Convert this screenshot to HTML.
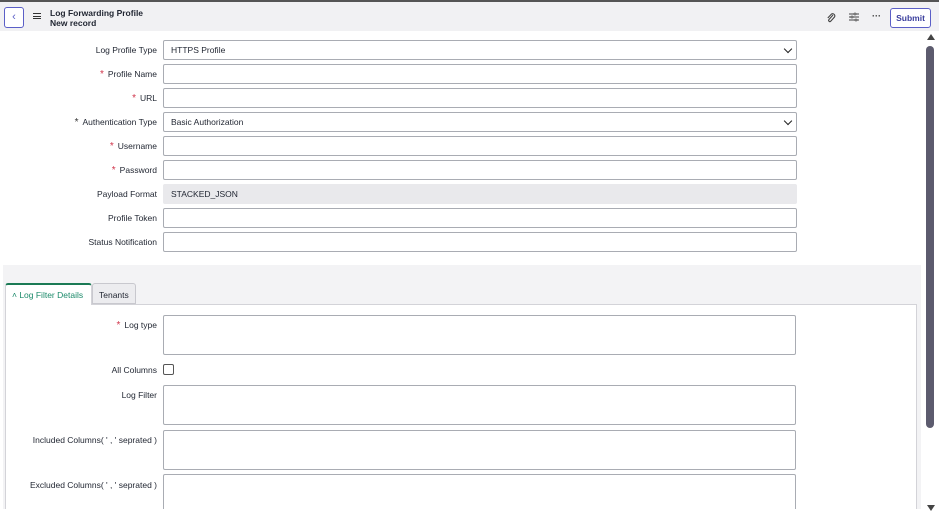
<!DOCTYPE html>
<html><head><style>
*{box-sizing:border-box;margin:0;padding:0}
body{width:939px;height:523px;overflow:hidden;background:#fff;font-family:"Liberation Sans",sans-serif;font-size:8.5px;color:#1f2430;position:relative}
.hdr{position:absolute;left:0;top:0;width:939px;height:31px;background:#f1f1f3;border-top:2px solid #555}
.back{position:absolute;left:4px;top:5px;width:20px;height:21px;border:1px solid #5b5fc7;border-radius:3px;background:#fff;color:#5b5fc7;font-size:11px;text-align:center;line-height:19px}
.t{position:absolute;left:50px;top:6px;font-weight:bold;font-size:8.5px;line-height:10px}
.sub{position:absolute;left:890px;top:6px;width:41px;height:20px;border:1px solid #5b5fc7;border-radius:3px;background:#fff;color:#3b3f9e;font-weight:bold;font-size:8.5px;text-align:center;line-height:18px}
.lbl{position:absolute;right:782px;text-align:right;white-space:nowrap}
.in{position:absolute;left:163px;width:634px;height:20px;border:1px solid #a9acb3;border-radius:2px;background:#fff;padding-left:7px;line-height:18px}
.st{color:#d0344a;font-size:10px;margin-right:4px}
.sk{color:#333;font-size:10px;margin-right:4px}
.chev{position:absolute;right:5px;top:5px;width:6px;height:6px;border-right:1.5px solid #222;border-bottom:1.5px solid #222;transform:rotate(45deg)}
.sec{position:absolute;left:3px;top:265px;width:918px;height:244px;background:#f3f3f5}
.card{position:absolute;left:5px;top:304px;width:912px;height:210px;background:#fff;border:1px solid #d3d3d8;border-bottom:none}
.ta{position:absolute;left:163px;width:633px;height:40px;border:1px solid #a9acb3;border-radius:2px;background:#fff}
</style></head><body>
<div class="hdr">
<div class="back">&lsaquo;</div>
<div style="position:absolute;left:33px;top:11px;width:8px;height:6px;border-top:1px solid #333;border-bottom:1px solid #333"><div style="margin-top:2px;border-top:1px solid #333"></div></div>
<div class="t">Log Forwarding Profile<br>New record</div>
<svg style="position:absolute;left:826px;top:10px" width="10" height="11" viewBox="0 0 10 11"><path d="M7 3 L3 7.5 a1.2 1.2 0 0 0 1.7 1.7 L8.5 5 a2.2 2.2 0 0 0-3-3 L1.8 6" fill="none" stroke="#444" stroke-width="1.1"/></svg>
<svg style="position:absolute;left:849px;top:10px" width="10" height="10" viewBox="0 0 10 10"><path d="M0 2h10M0 5h10M0 8h10" stroke="#444" stroke-width="0.9"/><circle cx="6" cy="2" r="1" fill="#fff" stroke="#444" stroke-width=".8"/><circle cx="3" cy="5" r="1" fill="#fff" stroke="#444" stroke-width=".8"/><circle cx="7" cy="8" r="1" fill="#fff" stroke="#444" stroke-width=".8"/></svg>
<div style="position:absolute;left:872px;top:9px;font-weight:bold;font-size:9px;color:#333">···</div>
<div class="sub">Submit</div>
</div>

<div class="lbl" style="top:45px">Log Profile Type</div><div class="in" style="top:40px">HTTPS Profile<div class="chev"></div></div>
<div class="lbl" style="top:69px"><span class="st">*</span>Profile Name</div><div class="in" style="top:64px"></div>
<div class="lbl" style="top:93px"><span class="st">*</span>URL</div><div class="in" style="top:88px"></div>
<div class="lbl" style="top:117px"><span class="sk">*</span>Authentication Type</div><div class="in" style="top:112px">Basic Authorization<div class="chev"></div></div>
<div class="lbl" style="top:141px"><span class="st">*</span>Username</div><div class="in" style="top:136px"></div>
<div class="lbl" style="top:165px"><span class="st">*</span>Password</div><div class="in" style="top:160px"></div>
<div class="lbl" style="top:189px">Payload Format</div><div class="in" style="top:184px;background:#e9e9ec;border-color:#e9e9ec">STACKED_JSON</div>
<div class="lbl" style="top:213px">Profile Token</div><div class="in" style="top:208px"></div>
<div class="lbl" style="top:237px">Status Notification</div><div class="in" style="top:232px"></div>

<div class="sec"></div>
<div class="card"></div>
<div style="position:absolute;left:5px;top:283px;width:87px;height:22px;background:#fff;border:1px solid #d3d3d8;border-top:2px solid #1b7a55;border-bottom:none;border-radius:3px 3px 0 0;color:#1b8a6a;padding:5px 0 0 6px;font-size:8.5px">˄ Log Filter Details</div>
<div style="position:absolute;left:92px;top:283px;width:44px;height:21px;background:#ececef;border:1px solid #c8c8ce;border-radius:3px 3px 0 0;padding:6px 0 0 6px">Tenants</div>

<div class="lbl" style="top:320px"><span class="st">*</span>Log type</div><div class="ta" style="top:315px"></div>
<div class="lbl" style="top:365px">All Columns</div><div style="position:absolute;left:163px;top:364px;width:11px;height:11px;border:1px solid #555;border-radius:2px"></div>
<div class="lbl" style="top:390px">Log Filter</div><div class="ta" style="top:385px"></div>
<div class="lbl" style="top:435px">Included Columns( ' , ' seprated )</div><div class="ta" style="top:430px"></div>
<div class="lbl" style="top:480px">Excluded Columns( ' , ' seprated )</div><div class="ta" style="top:474px"></div>
<div style="position:absolute;left:0;top:509px;width:925px;height:14px;background:#fff"></div>

<div style="position:absolute;left:927px;top:34px;width:0;height:0;border-left:4px solid transparent;border-right:4px solid transparent;border-bottom:6px solid #444"></div>
<div style="position:absolute;left:926px;top:46px;width:8px;height:382px;background:#5c5b6e;border-radius:4px"></div>
<div style="position:absolute;left:927px;top:505px;width:0;height:0;border-left:4px solid transparent;border-right:4px solid transparent;border-top:6px solid #444"></div>
</body></html>
